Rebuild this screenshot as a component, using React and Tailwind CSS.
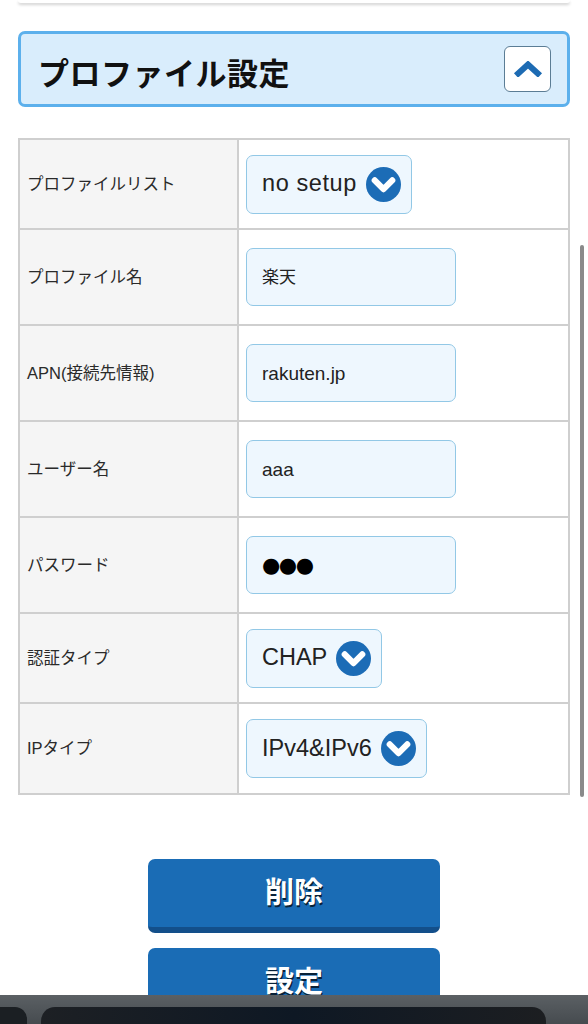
import React from "react";

const FONT = { fontFamily: '"Liberation Sans", "Noto Sans CJK JP", sans-serif' };

function Chevron() {
  return (
    <svg width="35" height="35" viewBox="0 0 34 34" className="shrink-0">
      <circle cx="17" cy="17" r="17" fill="#1c6cb6" />
      <polyline
        points="8.5,13 17,21.5 25.5,13"
        fill="none"
        stroke="#ffffff"
        strokeWidth="6"
        strokeLinecap="round"
        strokeLinejoin="round"
      />
    </svg>
  );
}

function SelectBox({ value, spaced }) {
  return (
    <div className="flex h-[59px] items-center gap-[9px] rounded-[7px] border-[1.5px] border-[#92c8e6] bg-[#eef7fe] pl-[15px] pr-[10px]">
      <span className={`text-[23.5px] leading-none text-[#222] ${spaced ? "tracking-[0.6px]" : ""}`}>{value}</span>
      <Chevron />
    </div>
  );
}

function InputBox({ children, size = "text-[19px]" }) {
  return (
    <div className={`flex h-[58px] w-[210px] items-center rounded-[7px] border-[1.5px] border-[#92c8e6] bg-[#eef7fe] pl-[15px] ${size} leading-none text-[#222]`}>
      {children}
    </div>
  );
}

function Row({ label, h, first, children }) {
  return (
    <div className={`flex ${h} ${first ? "" : "border-t-2 border-[#cfcfcf]"}`}>
      <div className="flex w-[219px] shrink-0 items-center border-r-2 border-[#cfcfcf] bg-[#f5f5f5] pl-[7px] text-[16.5px] text-[#2a2a2a]">
        {label}
      </div>
      <div className="flex flex-1 items-center bg-white pl-[7px]">{children}</div>
    </div>
  );
}

function BlueButton({ label }) {
  return (
    <div className="flex h-[74px] w-[292px] items-center justify-center rounded-[7px] border-b-[6px] border-[#134f8a] bg-[#1a6cb5]">
      <span className="text-[29px] font-bold leading-none text-white [text-shadow:1px_2px_0_rgba(0,0,0,0.7)]">
        {label}
      </span>
    </div>
  );
}

export default function App() {
  return (
    <div className="relative h-[1024px] w-[588px] overflow-hidden bg-white" style={FONT}>
      <div className="mx-[18px] h-[3px] rounded-b-[3px] bg-white shadow-[0_2px_3px_rgba(0,0,0,0.18)]" />

      <div className="mx-[18px] mt-[28px] flex h-[76px] items-center justify-between rounded-[7px] border-[3px] border-[#5cb0ec] bg-[#d9edfc] pl-[17px] pr-[16px]">
        <h1 className="pt-[10px] text-[31px] font-bold leading-none tracking-[0.5px] text-[#111]">プロファイル設定</h1>
        <div className="flex h-[46px] w-[47px] items-center justify-center rounded-[6px] border-[1.5px] border-[#5b7d95] bg-white">
          <svg width="30" height="16" viewBox="0 0 30 16">
            <polyline
              points="3,14.5 15,3.5 27,14.5"
              fill="none"
              stroke="#1d6bb3"
              strokeWidth="6"
              strokeLinejoin="miter"
            />
          </svg>
        </div>
      </div>

      <div className="mx-[18px] mt-[31px] border-2 border-[#cfcfcf]">
        <Row label="プロファイルリスト" h="h-[88px]" first>
          <SelectBox value="no setup" spaced />
        </Row>
        <Row label="プロファイル名" h="h-[96px]">
          <InputBox size="text-[17px]">楽天</InputBox>
        </Row>
        <Row label="APN(接続先情報)" h="h-[96px]">
          <InputBox>rakuten.jp</InputBox>
        </Row>
        <Row label="ユーザー名" h="h-[96px]">
          <InputBox>aaa</InputBox>
        </Row>
        <Row label="パスワード" h="h-[96px]">
          <InputBox size="text-[21px]">
            <span className="tracking-[-1.5px] text-black" style={{ fontFamily: '"DejaVu Sans", sans-serif' }}>●●●</span>
          </InputBox>
        </Row>
        <Row label="認証タイプ" h="h-[90px]">
          <SelectBox value="CHAP" />
        </Row>
        <Row label="IPタイプ" h="h-[91px]">
          <SelectBox value="IPv4&IPv6" />
        </Row>
      </div>

      <div className="mt-[64px] flex flex-col items-center gap-[15px]">
        <BlueButton label="削除" />
        <BlueButton label="設定" />
      </div>

      <div className="absolute right-[4px] top-[245px] h-[552px] w-[4px] rounded-full bg-[#8a8a8a]" />

      <div className="absolute bottom-0 left-0 right-0 h-[29px] bg-gradient-to-b from-[#5b6064] to-[#464b4f]">
        <div className="absolute bottom-0 left-0 top-[12px] w-[27px] rounded-tr-[12px] bg-[#1b1f23]" />
        <div className="absolute bottom-0 left-[41px] top-[12px] w-[505px] rounded-t-[14px] bg-gradient-to-r from-[#1d2024] via-[#0e1824] to-[#1c1e21]" />
      </div>
    </div>
  );
}
